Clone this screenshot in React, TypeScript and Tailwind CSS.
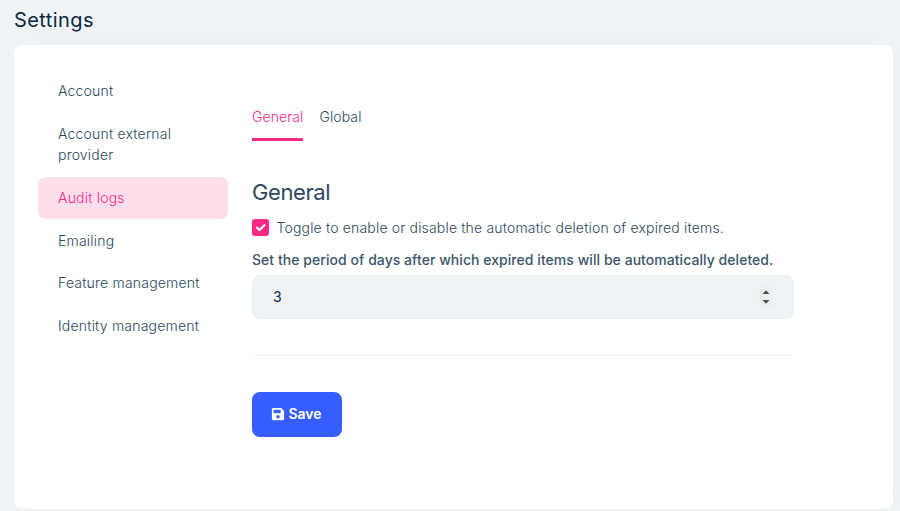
import { FaSave } from "react-icons/fa";

const menu = [
  { lines: ["Account"] },
  { lines: ["Account external", "provider"] },
  { lines: ["Audit logs"], active: true },
  { lines: ["Emailing"] },
  { lines: ["Feature management"] },
  { lines: ["Identity management"] },
];

export default function App() {
  return (
    <div className="flex h-[511px] w-[900px] flex-col overflow-hidden bg-[#eff3f6] pl-[14px] pr-[7px] font-['Inter',sans-serif] text-[14px] font-light text-[#2b4960]">
      <h1 className="h-[45px] shrink-0 pt-[5px] text-[20px] font-normal leading-[30px] tracking-[0.42px] text-[#0b2a42]">Settings</h1>
      <main className="flex h-[464px] shrink-0 rounded-[8px] bg-white pl-[24px] pt-[25px] shadow-[0_0_20px_rgba(10,60,80,0.02)]">
        <nav className="w-[190px] shrink-0 tracking-[0.2px]">
          {menu.map((item) => (
            <div
              key={item.lines[0]}
              className={
                item.active
                  ? "mb-px rounded-[8px] bg-[#ffdeec] px-5 pt-[10.2px] pb-[10.4px] leading-[21.3px] text-[#f82a85]"
                  : "mb-px px-5 py-[10.2px] leading-[21.3px]"
              }
            >
              {item.lines.map((line) => (
                <div key={line}>{line}</div>
              ))}
            </div>
          ))}
        </nav>
        <section className="ml-[24px] w-[542px]">
          <div className="mt-[35px] flex h-[36px] gap-[16.5px] leading-[24px] tracking-[0.08px]">
            <div className="w-[51px] whitespace-nowrap border-b-3 border-[#f82a85] text-[#f82a85]">General</div>
            <div>Global</div>
          </div>
          <h2 className="mt-[36px] text-[22px] font-normal leading-[30px] tracking-[-0.4px]">General</h2>
          <label className="mt-[9px] flex h-[22px] items-center whitespace-nowrap tracking-[0.17px]">
            <span className="mr-[7.5px] flex size-[17px] items-center justify-center rounded-[3px] bg-[#f82a85]">
              <svg viewBox="0 0 17 17" className="size-[17px]" fill="none" stroke="white" strokeWidth="2.2" strokeLinecap="round" strokeLinejoin="round">
                <path d="m5 8.7 2.4 2.3 5-4.8" />
              </svg>
            </span>
            Toggle to enable or disable the automatic deletion of expired items.
          </label>
          <div className="mt-[11px] h-[22px] whitespace-nowrap font-medium leading-[22px] tracking-[0.05px] text-[#3b566a]">
            Set the period of days after which expired items will be automatically deleted.
          </div>
          <div className="mt-[4px] flex h-[44px] items-center justify-between rounded-[8px] border border-[#eaeff2] bg-[#eff3f6] pl-[20px] pr-[20px] font-normal text-[#0b2a42]">
            <span className="-mt-px">3</span>
            <svg viewBox="0 0 14 22" className="h-[22px] w-[14px]">
              <rect width="14" height="22" fill="#efefef" />
              <path d="m3.5 8 3.5-3.7L10.5 8ZM3.5 14h7L7 17.7Z" fill="#505050" />
            </svg>
          </div>
          <hr className="mt-[36px] border-[#f2f4f6]" />
          <button className="mt-[36px] flex h-[45px] w-[90px] items-center justify-center gap-[3px] rounded-[8px] bg-[#355dff] pb-[2px] pr-px font-semibold text-white">
            <FaSave />
            Save
          </button>
        </section>
      </main>
    </div>
  );
}
